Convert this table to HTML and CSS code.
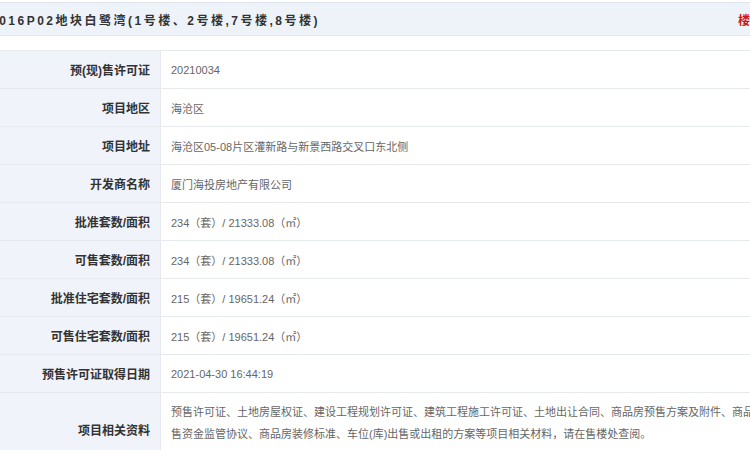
FILE: index.html
```html
<!DOCTYPE html>
<html lang="zh-CN">
<head>
<meta charset="utf-8">
<title>项目信息</title>
<link rel="stylesheet" href="styles.css">
</head>
<body>
<div class="page">
  <div class="head">
    <h1 class="title">2016P02地块白鹭湾(1号楼、2号楼,7号楼,8号楼)</h1>
    <a class="link">楼盘表</a>
  </div>
  <table class="info">
    <tr><th>预(现)售许可证</th><td>20210034</td></tr>
    <tr><th>项目地区</th><td>海沧区</td></tr>
    <tr><th>项目地址</th><td>海沧区05-08片区灌新路与新景西路交叉口东北侧</td></tr>
    <tr><th>开发商名称</th><td>厦门海投房地产有限公司</td></tr>
    <tr><th>批准套数/面积</th><td>234（套）/ 21333.08（㎡）</td></tr>
    <tr><th>可售套数/面积</th><td>234（套）/ 21333.08（㎡）</td></tr>
    <tr><th>批准住宅套数/面积</th><td>215（套）/ 19651.24（㎡）</td></tr>
    <tr><th>可售住宅套数/面积</th><td>215（套）/ 19651.24（㎡）</td></tr>
    <tr><th>预售许可证取得日期</th><td>2021-04-30 16:44:19</td></tr>
    <tr class="multi"><th>项目相关资料</th><td>预售许可证、土地房屋权证、建设工程规划许可证、建筑工程施工许可证、土地出让合同、商品房预售方案及附件、商品房预售资金监管协议、商品房装修标准、车位(库)出售或出租的方案等项目相关材料，请在售楼处查阅。</td></tr>
  </table>
</div>
</body>
</html>
```
FILE: styles.css
```css
html, body {
  margin: 0;
  padding: 0;
  background: #ffffff;
  overflow: hidden;
}
body {
  font-family: "Liberation Sans", "Noto Sans CJK SC", sans-serif;
  color: #666;
}
.page {
  width: 800px;
  padding-top: 2px;
}
.head {
  display: flex;
  align-items: center;
  height: 32px;
  background: #edf3f9;
  border-top: 1px solid #dfe5ec;
  border-bottom: 1px solid #e3e8ee;
}
.title {
  margin: 0 0 0 -10px;
  font-size: 12px;
  font-weight: bold;
  letter-spacing: 2.5px;
  color: #333;
  white-space: nowrap;
}
.link {
  margin-left: auto;
  margin-right: 26px;
  font-size: 12px;
  font-weight: bold;
  color: #d0161b;
}
.info {
  margin-top: 14px;
  width: 790px;
  border-collapse: collapse;
  font-size: 11px;
}
.info th,
.info td {
  height: 37px;
  padding: 0 10px;
  border-top: 1px solid #e6eaef;
  vertical-align: middle;
}
.info th {
  width: 140px;
  text-align: right;
  font-size: 12px;
  font-weight: bold;
  color: #333;
  background: #f0f4fa;
  border-right: 1px solid #e6eaef;
  white-space: nowrap;
}
.info td {
  color: #666;
  text-align: left;
}
.multi td {
  line-height: 22px;
  padding-top: 8px;
  padding-bottom: 20px;
  vertical-align: top;
}
.multi th {
  vertical-align: middle;
}
```
